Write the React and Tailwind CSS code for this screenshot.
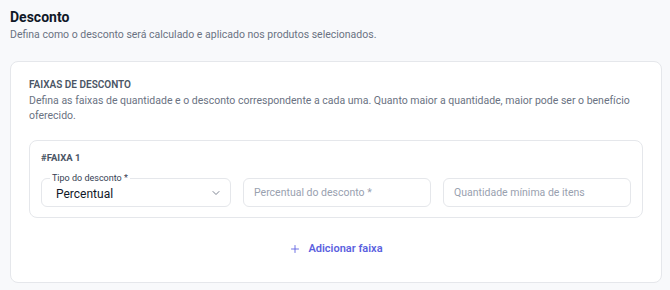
import { ChevronDown, Plus } from "lucide-react";

const font = { fontFamily: "Roboto, 'Noto Sans', sans-serif" };

const Field = ({ placeholder }) => (
  <div className="flex-1 h-[29px] rounded-md border border-gray-200 bg-white flex items-center px-2.5 text-[10.5px] text-gray-400">
    {placeholder}
  </div>
);

export default function App() {
  return (
    <div style={font} className="w-[670px] h-[290px] bg-[#f8f9fb] overflow-hidden">
      <div className="pl-[10px] pr-[8px] pt-[8px]">
        <h1 className="text-[14px] font-bold text-gray-900 leading-[18px]">Desconto</h1>
        <p className="text-[10.5px] text-gray-500 leading-[16px] mt-[1px]">
          Defina como o desconto será calculado e aplicado nos produtos selecionados.
        </p>

        <div className="mt-[18px] rounded-lg border border-gray-200 bg-white px-[18px] pt-[16px] pb-[26px]">
          <div className="text-[10px] font-semibold text-gray-600 uppercase leading-[14px]">
            Faixas de desconto
          </div>
          <p className="text-[10.5px] text-gray-500 leading-[15px] mt-[1px]">
            Defina as faixas de quantidade e o desconto correspondente a cada uma. Quanto maior a quantidade, maior pode ser o benefício oferecido.
          </p>

          <div className="mt-[17px] rounded-lg border border-gray-200 px-[11px] pt-[11px] pb-[10px]">
            <div className="text-[9.5px] font-bold text-gray-600 leading-[12px]">#FAIXA 1</div>
            <div className="mt-[14px] flex gap-[12px]">
              <div className="relative flex-1 h-[29px] rounded-md border border-gray-200 bg-white flex items-center justify-between pl-[14px] pr-[8px]">
                <span className="absolute -top-[7px] left-[8px] bg-white px-[2px] text-[9px] text-gray-700 leading-[12px]">
                  Tipo do desconto *
                </span>
                <span className="text-[12px] text-gray-900 pt-[2px]">Percentual</span>
                <ChevronDown className="w-3 h-3 text-gray-500" strokeWidth={1.75} />
              </div>
              <Field placeholder="Percentual do desconto *" />
              <Field placeholder="Quantidade mínima de itens" />
            </div>
          </div>

          <div className="mt-[24px] flex justify-center">
            <button className="flex items-center gap-[7px] text-[11px] font-semibold text-[#5b5fe0] leading-[14px]">
              <Plus className="w-[12px] h-[12px]" strokeWidth={1.75} />
              Adicionar faixa
            </button>
          </div>
        </div>
      </div>
    </div>
  );
}
